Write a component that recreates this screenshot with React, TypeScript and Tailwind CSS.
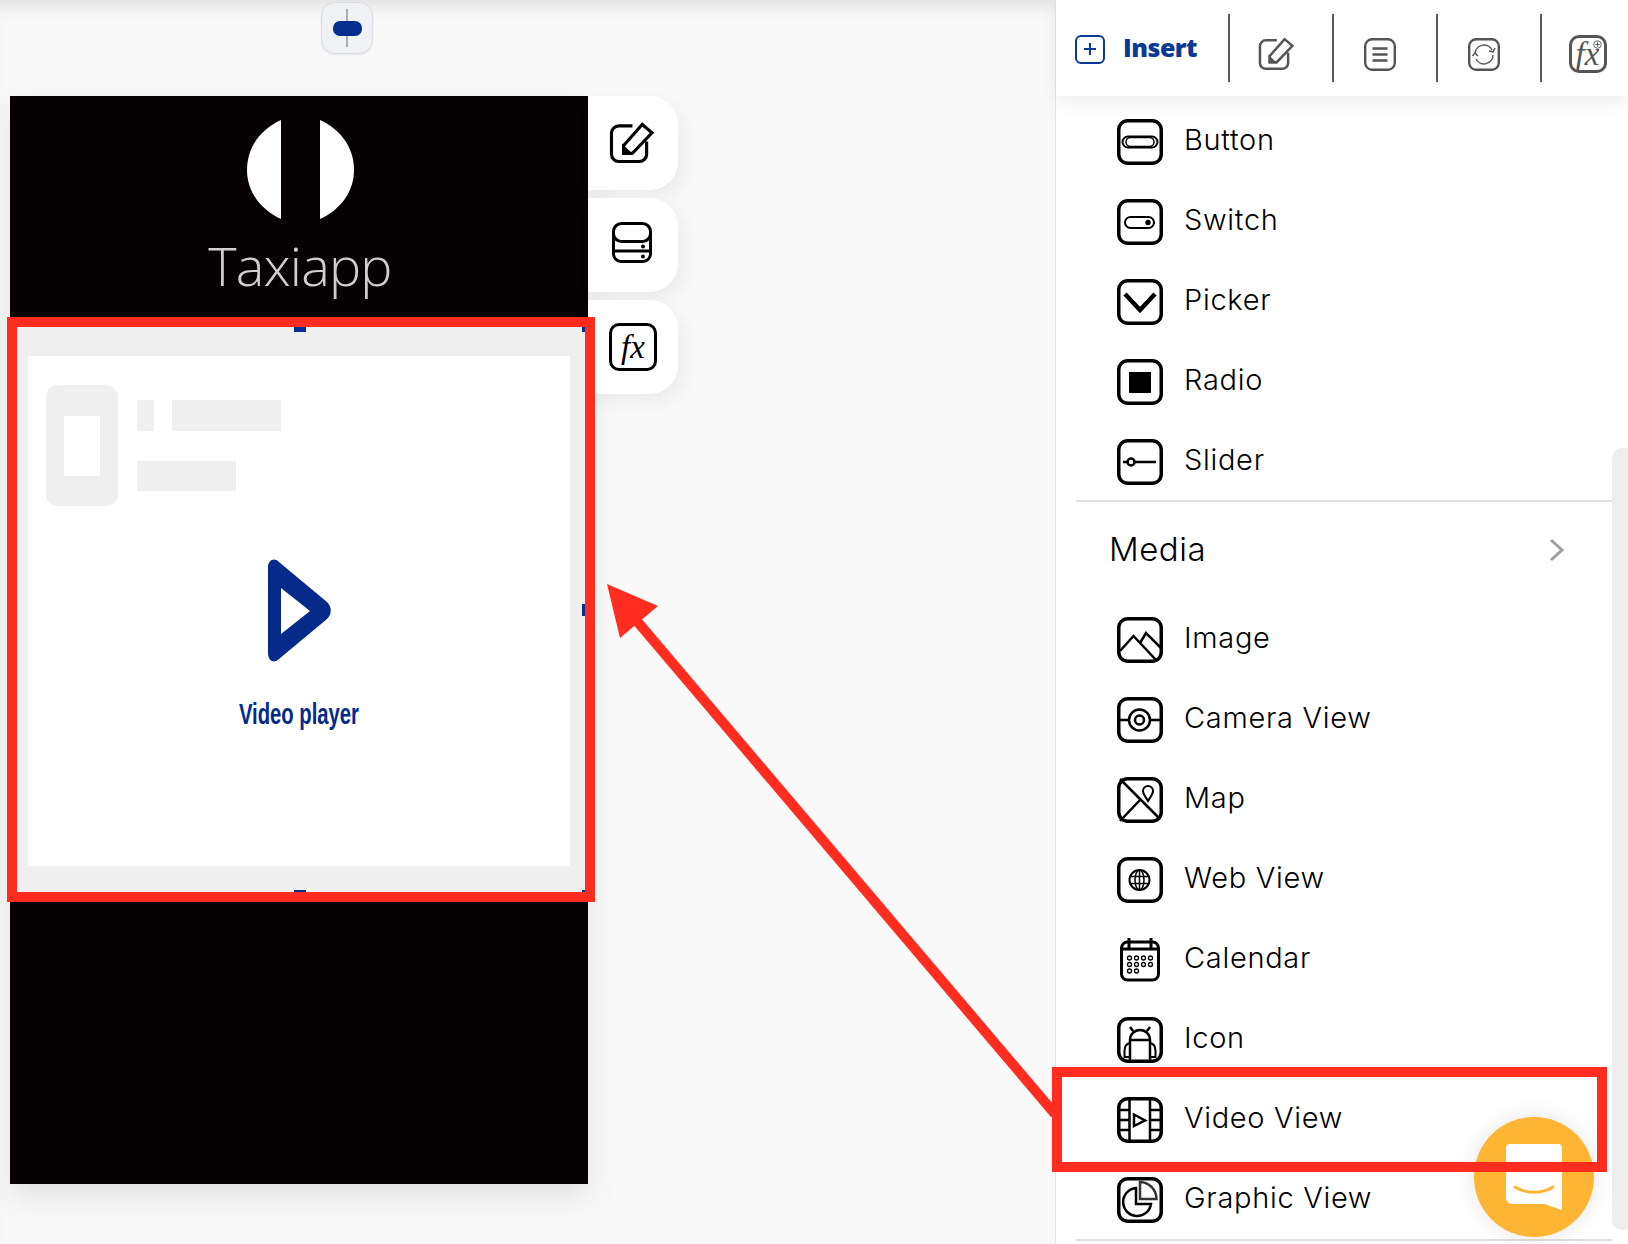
import type { ReactNode } from "react";

const listFont = "font-['Inter','Noto_Sans',sans-serif]";

function Frame({ children }: { children?: ReactNode }) {
  return (
    <svg viewBox="0 0 46 46" className="h-[46px] w-[46px] shrink-0" fill="none" stroke="#000" strokeWidth="2">
      <rect x="1.75" y="1.75" width="42.5" height="42.5" rx="9" strokeWidth="3.5" />
      {children}
    </svg>
  );
}

const icons: Record<string, ReactNode> = {
  Button: (
    <Frame>
      <rect x="5.5" y="17.5" width="35" height="11" rx="5.5" />
      <rect x="9" y="18.5" width="28" height="9" rx="4.5" strokeWidth="1.5" />
    </Frame>
  ),
  Switch: (
    <Frame>
      <rect x="8" y="18" width="29" height="11" rx="5.5" />
      <circle cx="31" cy="23.5" r="2.7" fill="#000" stroke="none" />
    </Frame>
  ),
  Picker: (
    <Frame>
      <path d="M8 15 L23 31 L38 15" strokeWidth="4.5" />
    </Frame>
  ),
  Radio: (
    <Frame>
      <rect x="12" y="13" width="22" height="21" fill="#000" stroke="none" />
    </Frame>
  ),
  Slider: (
    <Frame>
      <path d="M6 23 H10.5 M18 23 H39" strokeWidth="2.5" />
      <circle cx="14" cy="23" r="3.5" strokeWidth="2.5" />
    </Frame>
  ),
  Image: (
    <Frame>
      <path d="M3 34 L16.5 19 L40 44 M23 26 L29 16 L44 31" strokeWidth="2.5" />
    </Frame>
  ),
  "Camera View": (
    <Frame>
      <circle cx="22.5" cy="23" r="10.5" strokeWidth="2.5" />
      <circle cx="22.5" cy="23" r="4.5" strokeWidth="2.5" />
      <path d="M2 23 H12 M33 23 H44" strokeWidth="2.5" />
    </Frame>
  ),
  Map: (
    <Frame>
      <path d="M3 2 L43 42 M3 44 L23 23" strokeWidth="2.5" />
      <path d="M31 24 C29 20.5 26 17 26 14 A5 5 0 0 1 36 14 C36 17 33 20.5 31 24 Z" fill="#fff" strokeWidth="2" />
    </Frame>
  ),
  "Web View": (
    <Frame>
      <circle cx="22.5" cy="23" r="10" />
      <ellipse cx="22.5" cy="23" rx="4.5" ry="10" strokeWidth="1.5" />
      <path d="M22.5 13 V33 M13 19.5 H32 M13 26.5 H32" strokeWidth="1.5" />
    </Frame>
  ),
  Calendar: (
    <svg viewBox="0 0 46 46" className="h-[46px] w-[46px] shrink-0" fill="none" stroke="#000" strokeWidth="2">
      <rect x="4.5" y="5" width="37" height="38" rx="6" strokeWidth="3" />
      <path d="M4.5 12 H41.5 M12 1 V12 M34 1 V12" strokeWidth="3" />
      {[0, 1, 2, 3].map((c) =>
        [0, 1, 2].map((r) =>
          r === 2 && c > 1 ? null : (
            <circle key={`${c}-${r}`} cx={12.5 + c * 7} cy={21 + r * 6.5} r="2" strokeWidth="1.3" />
          ),
        ),
      )}
    </svg>
  ),
  Icon: (
    <Frame>
      <path d="M13 23 A10 10 0 0 1 33 23 Z M13 23 V44 M33 23 V44 M16 14 L13 10 M30 14 L33 10" strokeWidth="2.5" />
      <path d="M13 26 Q7.5 27 7.5 34 V40 H13 M33 26 Q38.5 27 38.5 34 V40 H33" strokeWidth="2" />
    </Frame>
  ),
  "Video View": (
    <Frame>
      <path d="M12.5 2 V44 M33 2 V44 M2 13 H12 M2 23 H12 M2 33 H12 M33 13 H44 M33 23 H44 M33 33 H44" strokeWidth="2.5" />
      <path d="M17 17.5 L28 23.5 L17 29 Z" strokeWidth="2.5" />
    </Frame>
  ),
  "Graphic View": (
    <Frame>
      <path d="M19 11 A14 14 0 1 0 34 27 H19 Z" strokeWidth="2.5" />
      <path d="M23 5 A17 17 0 0 1 39.5 22 H23 Z" strokeWidth="2.5" stroke="#333" />
    </Frame>
  ),
};

function Row({ name }: { name: string }) {
  return (
    <div className="flex h-[80px] items-center pl-[61px]">
      {icons[name]}
      <span className={`ml-[21px] pb-[5px] text-[29px] font-light tracking-[0.7px] text-black ${listFont}`}>{name}</span>
    </div>
  );
}

function EditIcon({ color, small }: { color: string; small?: boolean }) {
  return (
    <svg
      viewBox="0 0 46 43"
      className={small ? "h-[34px] w-[36px]" : "h-[42px] w-[45px]"}
      fill="none"
      stroke={color}
      strokeWidth="3.2"
    >
      <path d="M24 4 H10 A7.5 7.5 0 0 0 2.5 11.5 V33 A7.5 7.5 0 0 0 10 40.5 H31 A7.5 7.5 0 0 0 38.5 33 V20" />
      <path d="M15 24 L34 2.5 L44 11 L24 32 H15 Z" fill="#fff" />
      <path d="M15 26 L21 32 H15 Z" fill={color} />
    </svg>
  );
}

function Fx({ size, plus, color }: { size: string; plus?: boolean; color: string }) {
  return (
    <div
      className={`relative flex items-center justify-center rounded-[10px] border-[3px] ${size}`}
      style={{ borderColor: color, color }}
    >
      <span className="font-['Liberation_Serif',serif] text-[33px] leading-none italic">fx</span>
      {plus && (
        <svg viewBox="0 0 10 10" className="absolute top-[2px] right-[2px] h-[9px] w-[9px]" fill="none" stroke={color}>
          <circle cx="5" cy="5" r="4.2" />
          <path d="M5 2.5 V7.5 M2.5 5 H7.5" />
        </svg>
      )}
    </div>
  );
}

function SideButton({ children }: { children: ReactNode }) {
  return (
    <div className="flex h-[94px] w-[90px] items-center rounded-r-[28px] bg-white pl-[21px] shadow-[6px_8px_18px_rgba(0,0,0,0.06)]">
      {children}
    </div>
  );
}

export default function App() {
  return (
    <div className="relative flex h-[1244px] w-[1628px] overflow-hidden bg-[#f9f9f9]">
      {/* canvas */}
      <div className="w-[1055px] shrink-0 shadow-[inset_0_18px_18px_-12px_rgba(0,0,0,0.1)]">
        <div className="mt-[2px] ml-[321px] flex h-[52px] w-[52px] items-center justify-center rounded-[14px] border border-[#dcdde0] bg-[#f0f1f4] shadow-[0_1px_2px_rgba(0,0,0,0.08)]">
          <div className="relative flex h-[38px] w-[2px] items-center justify-center bg-[#b0b0b0]">
            <div className="absolute h-[15px] w-[29px] shrink-0 rounded-[7px] bg-[#052e8f]" />
          </div>
        </div>

        <div className="mt-[42px] ml-[10px] flex items-start">
          <div className="flex h-[1088px] w-[578px] flex-col bg-[#060102] shadow-[0_12px_30px_rgba(0,0,0,0.1)]">
            <div className="flex h-[231px] flex-col items-center pt-[24px] pl-[2px]">
              <svg viewBox="0 0 107 99" className="h-[99px] w-[107px]" fill="#fff">
                <path d="M34 0 V99 C14 90 0 72 0 50 C0 27 14 9 34 0 Z" />
                <path d="M73 0 V99 C93 90 107 72 107 50 C107 27 93 9 73 0 Z" />
              </svg>
              <span className="mt-[12px] font-['Open_Sans',sans-serif] text-[54px] leading-[68px] font-light tracking-[-0.8px] text-[#cfcfcf]">
                Taxiapp
              </span>
            </div>

            <div className="relative h-[565px] bg-[#efefef] px-[18px] pt-[29px]">
              <div className="flex h-[510px] flex-col items-center bg-white">
                <div className="flex w-full pt-[29px] pl-[18px]">
                  <div className="flex h-[121px] w-[72px] items-center justify-center rounded-[12px] bg-[#efefef]">
                    <div className="h-[60px] w-[36px] bg-white" />
                  </div>
                  <div className="ml-[19px] pt-[15px]">
                    <div className="flex gap-[18px]">
                      <div className="h-[31px] w-[17px] bg-[#efefef]" />
                      <div className="h-[31px] w-[109px] bg-[#efefef]" />
                    </div>
                    <div className="mt-[30px] h-[30px] w-[99px] bg-[#efefef]" />
                  </div>
                </div>
                <svg viewBox="0 0 63 103" className="mt-[53px] h-[103px] w-[63px]">
                  <path
                    fillRule="evenodd"
                    fill="#052a8a"
                    d="M0 9 C0 1 6 -2 11 3 L59 43 C64 48 64 55 59 60 L11 100 C6 105 0 102 0 94 Z M13 29 V75 L42 52 Z"
                  />
                </svg>
                <span className="mt-[34px] scale-x-[0.675] font-['Liberation_Sans',sans-serif] text-[30px] leading-[36px] font-bold whitespace-nowrap text-[#052a8a]">
                  Video player
                </span>
              </div>
              <div className="absolute top-0 left-[284px] h-[5px] w-[12px] bg-[#052e8f]" />
              <div className="absolute top-0 right-[3px] h-[5px] w-[3px] bg-[#052e8f]" />
              <div className="absolute top-[277px] right-[3px] h-[12px] w-[3px] bg-[#052e8f]" />
              <div className="absolute bottom-0 left-[284px] h-[2px] w-[12px] bg-[#052e8f]" />
              <div className="absolute right-[3px] bottom-0 h-[2px] w-[3px] bg-[#052e8f]" />
            </div>
          </div>

          <div className="flex flex-col gap-[8px]">
            <SideButton>
              <EditIcon color="#000" />
            </SideButton>
            <SideButton>
              <svg viewBox="0 0 40 41" className="mb-[6px] ml-[3px] h-[41px] w-[40px]" fill="none" stroke="#000" strokeWidth="3">
                <rect x="1.5" y="1.5" width="37" height="18" rx="8" />
                <path d="M1.5 11 V32 A7.5 7.5 0 0 0 9 39.5 H31 A7.5 7.5 0 0 0 38.5 32 V11 M1.5 29 H38.5" />
                <circle cx="31" cy="24.5" r="2" fill="#000" stroke="none" />
                <circle cx="31" cy="34.5" r="2" fill="#000" stroke="none" />
              </svg>
            </SideButton>
            <SideButton>
              <Fx size="h-[48px] w-[48px]" color="#000" />
            </SideButton>
          </div>
        </div>
      </div>

      {/* insert panel */}
      <div className="flex w-[573px] shrink-0 flex-col border-l border-[#e4e4e4] bg-white">
        <div className="z-10 flex h-[96px] items-start bg-white pt-[14px] shadow-[0_6px_18px_rgba(0,0,0,0.07)]">
          <div className="flex h-[68px] w-[172px] shrink-0 items-center pt-[2px] pl-[19px]">
            <div className="flex h-[29px] w-[30px] items-center justify-center rounded-[6px] border-2 border-[#0a3a94]">
              <svg viewBox="0 0 14 14" className="h-[14px] w-[14px]" stroke="#0a3a94" strokeWidth="2">
                <path d="M7 1 V13 M1 7 H13" />
              </svg>
            </div>
            <span className="ml-[18px] pb-[2px] font-['Open_Sans',sans-serif] text-[25px] font-extrabold tracking-[-0.5px] text-[#0a3a94]">
              Insert
            </span>
          </div>
          <div className="flex h-[68px] w-[104px] shrink-0 items-center justify-center border-l-2 border-[#555] pt-[12px] pr-[10px]">
            <EditIcon color="#555" small />
          </div>
          <div className="flex h-[68px] w-[104px] shrink-0 items-center justify-center border-l-2 border-[#555] pt-[12px] pr-[10px]">
            <svg viewBox="0 0 32 33" className="h-[33px] w-[32px]" fill="none" stroke="#555" strokeWidth="2.4">
              <rect x="1.2" y="1.2" width="29.6" height="30.6" rx="7" />
              <path d="M8.5 10.5 H23.5 M8.5 16.5 H23.5 M8.5 22.5 H23.5" strokeWidth="2.6" />
            </svg>
          </div>
          <div className="flex h-[68px] w-[104px] shrink-0 items-center justify-center border-l-2 border-[#555] pt-[12px] pr-[10px]">
            <svg viewBox="0 0 32 33" className="h-[33px] w-[32px]" fill="none" stroke="#555" strokeWidth="2.4">
              <rect x="1.2" y="1.2" width="29.6" height="30.6" rx="7" />
              <path d="M7 16 A9 9 0 0 1 24 12 M25 17 A9 9 0 0 1 8 21" strokeWidth="1.5" />
              <path d="M21 13 L25 14 L27 10 M4.5 18 L7 15 L10 18" strokeWidth="1.5" />
            </svg>
          </div>
          <div className="flex h-[68px] w-[88px] shrink-0 items-center justify-center border-l-2 border-[#555] pt-[12px] pl-[5px]">
            <Fx size="h-[38px] w-[38px]" plus color="#555" />
          </div>
        </div>

        <div className="pt-[6px]">
          {["Button", "Switch", "Picker", "Radio", "Slider"].map((n) => (
            <Row key={n} name={n} />
          ))}
        </div>
        <div className="-mt-[2px] ml-[20px] h-[2px] w-[536px] shrink-0 bg-[#e0e0e0]" />
        <div className="flex h-[98px] items-center pr-[63px] pl-[53px]">
          <span className={`flex-1 pb-[2px] text-[33px] font-light tracking-[0.5px] text-black ${listFont}`}>Media</span>
          <svg viewBox="0 0 16 24" className="mb-[3px] h-[24px] w-[16px]" fill="none" stroke="#a0a0a0" strokeWidth="3">
            <path d="M2 2 L13 12 L2 22" />
          </svg>
        </div>
        {["Image", "Camera View", "Map", "Web View", "Calendar", "Icon", "Video View", "Graphic View"].map((n) => (
          <Row key={n} name={n} />
        ))}
        <div className="-mt-[1px] ml-[20px] h-[2px] w-[536px] shrink-0 bg-[#e0e0e0]" />
      </div>

      {/* scrollbar track */}
      <div className="absolute top-[448px] right-0 h-[782px] w-[16px] rounded-l-[10px] bg-[#eeeeee]" />

      {/* chat bubble */}
      <div className="absolute top-[1117px] left-[1474px] flex h-[120px] w-[120px] items-center justify-center rounded-full bg-[#fdb533] shadow-[0_0_24px_rgba(0,0,0,0.1)]">
        <svg viewBox="0 0 56 66" className="h-[66px] w-[56px]">
          <path fill="#fff" d="M4 0 H52 A4 4 0 0 1 56 4 V66 L38 60 H6 A6 6 0 0 1 0 54 V4 A4 4 0 0 1 4 0 Z" />
          <path fill="none" stroke="#fdb533" strokeWidth="3" strokeLinecap="round" d="M9 43 C20 50 36 50 47 43" />
        </svg>
      </div>

      {/* annotation overlay */}
      <div className="absolute top-[317px] left-[7px] h-[585px] w-[588px] border-10 border-[#ff2d20]" />
      <div className="absolute top-[1067px] left-[1052px] h-[105px] w-[555px] border-10 border-[#ff2d20]" />
      <svg viewBox="0 0 1628 1244" className="pointer-events-none absolute inset-0 h-[1244px] w-[1628px]">
        <path d="M607 584 L658 606 L620 638 Z" fill="#ff2d20" />
        <path d="M636 620 L1055 1114" stroke="#ff2d20" strokeWidth="10" />
      </svg>
    </div>
  );
}
